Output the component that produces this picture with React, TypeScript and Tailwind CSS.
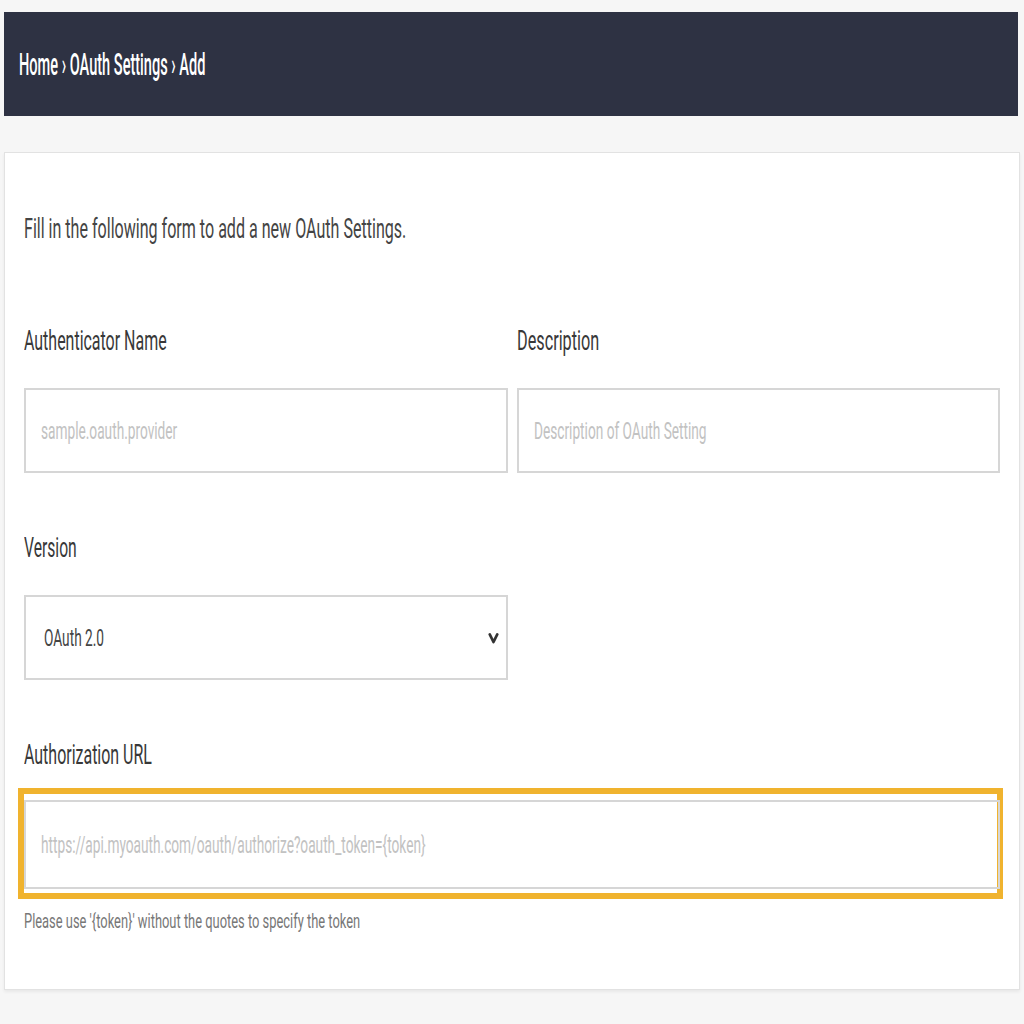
import React from "react";

function Sq({ children, className = "" }: { children: React.ReactNode; className?: string }) {
  return <span className={"inline-block origin-left whitespace-nowrap " + className}>{children}</span>;
}

function Chevron() {
  return (
    <svg width="11" height="16" viewBox="0 0 11 16" className="block">
      <polyline points="1.8,4.5 5.5,12 9.2,4.5" fill="none" stroke="#333" strokeWidth="2.8" strokeLinecap="round" strokeLinejoin="round" />
    </svg>
  );
}

export default function App() {
  return (
    <div className="min-h-screen bg-[#f6f6f6] pt-[12px] pl-[4px] pr-[4px] font-['Roboto',sans-serif]">
      <div className="h-[104px] mr-[2px] bg-[#2e3243] flex items-center pl-[15px]">
        <Sq className="scale-x-[0.455] text-[32px] leading-[40px] text-white font-medium">Home › OAuth Settings › Add</Sq>
      </div>
      <div className="mt-[36px] h-[838px] border border-[#e2e2e2] bg-white px-[19px] pt-[56px] shadow-[0_2px_3px_rgba(0,0,0,0.06)]">
        <div className="h-[40px] leading-[40px] text-[28px] text-[#444]">
          <Sq className="scale-x-[0.574]">Fill in the following form to add a new OAuth Settings.</Sq>
        </div>

        <div className="grid grid-cols-2 gap-x-[9px] mt-[72px]">
          <div>
            <div className="h-[40px] leading-[40px] text-[28px] text-[#383838]">
              <Sq className="scale-x-[0.57]">Authenticator Name</Sq>
            </div>
            <div className="mt-[27px] h-[85px] border-2 border-[#d6d6d6] flex items-center pl-[15px] text-[24px] text-[#c2c2c2]">
              <Sq className="scale-x-[0.57]">sample.oauth.provider</Sq>
            </div>
          </div>
          <div>
            <div className="h-[40px] leading-[40px] text-[28px] text-[#383838]">
              <Sq className="scale-x-[0.58]">Description</Sq>
            </div>
            <div className="mt-[27px] h-[85px] border-2 border-[#d6d6d6] flex items-center pl-[15px] text-[24px] text-[#c2c2c2]">
              <Sq className="scale-x-[0.57]">Description of OAuth Setting</Sq>
            </div>
          </div>
        </div>

        <div className="grid grid-cols-2 gap-x-[9px] mt-[55px]">
          <div>
            <div className="h-[40px] leading-[40px] text-[28px] text-[#383838]">
              <Sq className="scale-x-[0.56]">Version</Sq>
            </div>
            <div className="mt-[27px] h-[85px] border-2 border-[#d6d6d6] flex items-center justify-between pl-[18px] pr-[7px] text-[24px] text-[#444]">
              <Sq className="scale-x-[0.57]">OAuth 2.0</Sq>
              <Chevron />
            </div>
          </div>
        </div>

        <div className="mt-[55px] h-[40px] leading-[40px] text-[28px] text-[#383838]">
          <Sq className="scale-x-[0.57]">Authorization URL</Sq>
        </div>
        <div className="relative mt-[25px]">
          <div className="absolute left-[-6px] top-[-12px] right-[-3px] bottom-[-10px] border-[6px] border-[#f0b32e]" />
          <div className="relative h-[89px] border-2 border-[#d6d6d6] flex items-center pl-[15px] text-[24px] text-[#c2c2c2]">
            <Sq className="scale-x-[0.57]">https://api.myoauth.com/oauth/authorize?oauth_token={"{token}"}</Sq>
          </div>
        </div>
        <div className="mt-[20px] h-[24px] leading-[24px] text-[21px] text-[#777]">
          <Sq className="scale-x-[0.614]">Please use '{"{token}"}' without the quotes to specify the token</Sq>
        </div>
      </div>
    </div>
  );
}
